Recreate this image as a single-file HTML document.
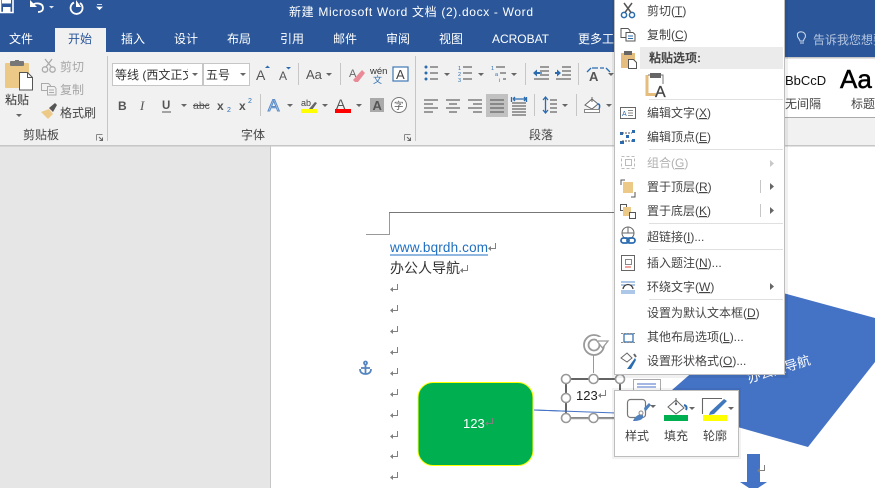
<!DOCTYPE html>
<html lang="zh-CN"><head><meta charset="utf-8"><title>新建 Microsoft Word 文档 (2).docx - Word</title>
<style>
html,body{margin:0;padding:0;width:875px;height:488px;overflow:hidden;background:#e6e6e6}
svg{display:block;font-family:"Liberation Sans","Noto Sans CJK SC",sans-serif;font-size:12px}
.tab{fill:#fff}.rb{fill:#444}.dis{fill:#a6a6a6}.m{fill:#444}.md{fill:#b1b1b1}
.u{text-decoration:underline}
.sep{stroke:#c6c6c6;stroke-width:1}
.ln{stroke:#666;stroke-width:1.2;fill:none}
.bl{stroke:#2b6cb0;stroke-width:1.3;fill:none}
.h{fill:#fff;stroke:#999;stroke-width:1.6}
</style></head><body>
<svg width="875" height="488" viewBox="0 0 875 488" xmlns="http://www.w3.org/2000/svg">
<defs>
<symbol id="ar" overflow="visible"><path d="M0 0h6l-3 3z" fill="#666"/></symbol>
<symbol id="ret" overflow="visible"><path d="M7.500 0v5.500H2" fill="none" stroke="#808080"/><path d="M0 5.500l3-2.500v5z" fill="#808080"/></symbol>
<symbol id="lau" overflow="visible"><path d="M.5.5h6M.5.5v6" stroke="#888" fill="none"/><path d="M3 3l3.500 3.500M6.500 3.500v3h-3" stroke="#666" fill="none"/></symbol>
</defs>

<!-- base -->
<rect width="875" height="488" fill="#e6e6e6"/>
<rect x="270" y="146" width="605" height="342" fill="#fff"/>
<rect x="270" y="146" width="1" height="342" fill="#c6c6c6"/>
<rect width="875" height="52" fill="#2b579a"/>
<rect y="52" width="875" height="93" fill="#f1f1f1"/>
<rect y="145" width="875" height="1.500" fill="#c6c6c6"/>
<rect x="55" y="28" width="51" height="25" fill="#f1f1f1"/>
<rect x="785" y="52" width="90" height="5" fill="#2b579a"/>
<rect x="785" y="57" width="90" height="60" fill="#fff"/>
<rect x="785" y="57" width="90" height="1.500" fill="#c6c6c6"/>
<rect x="785" y="117" width="90" height="1" fill="#aaa"/>

<!-- QAT -->
<path d="M.5 0V12.500H13V0" fill="none" stroke="#fff" stroke-width="1.600"/><rect x="3" y="7" width="7.500" height="5" fill="#fff"/><rect x="2" y="0" width="9" height="3.500" fill="#fff"/>
<path d="M31 5.500C36 2 43 3 43 8c0 3-2.500 4-5 4" fill="none" stroke="#fff" stroke-width="1.800"/><path d="M30 0v7h7z" fill="#fff"/>
<path d="M49 6h5l-2.500 2.500z" fill="#dfe6f1"/>
<path d="M74 2.500a6 6 0 1 0 6 .5" fill="none" stroke="#fff" stroke-width="1.800"/><path d="M76 0v7h5z" fill="#fff"/>
<path d="M97 4.500h5M97 7h5l-2.500 2.500z" stroke="#fff" fill="#fff" stroke-width=".8"/>
<text x="289" y="16" fill="#fff" textLength="244" lengthAdjust="spacing">新建 Microsoft Word 文档 (2).docx - Word</text>

<!-- tabs -->
<text x="9" y="43" class="tab">文件</text><text x="68" y="43" fill="#2b579a">开始</text>
<text x="121" y="43" class="tab">插入</text><text x="174" y="43" class="tab">设计</text><text x="227" y="43" class="tab">布局</text><text x="280" y="43" class="tab">引用</text><text x="333" y="43" class="tab">邮件</text><text x="386" y="43" class="tab">审阅</text><text x="439" y="43" class="tab">视图</text>
<text x="492" y="43" class="tab" textLength="57">ACROBAT</text><text x="578" y="43" class="tab">更多工具</text>
<path d="M798 33.500a4.500 4.500 0 0 1 8 2.500c0 2-2 3-2 5h-3.500c0-2-2.500-3-2.500-5 0-1 0-2 0-2.500zM800.500 43h4" fill="none" stroke="#c8d4e8" stroke-width="1.100" transform="translate(-.5 0)"/>
<text x="813" y="44" fill="#b4c4de">告诉我您想要</text>

<!-- clipboard -->
<rect x="5" y="63" width="24" height="25" rx="1" fill="#edc987"/>
<rect x="10" y="61" width="14" height="5" rx="1" fill="#777"/><rect x="15" y="60" width="4" height="3" fill="#777"/>
<path d="M19.500 72.500h8l5 5v12.500h-13z" fill="#fff" stroke="#555"/><path d="M27.500 72.500v5h5" fill="none" stroke="#555"/>
<text x="5" y="104" fill="#333">粘贴</text>
<use href="#ar" x="16" y="114"/>
<g fill="none" stroke="#aaa" stroke-width="1.300"><circle cx="45" cy="69.500" r="2.700"/><circle cx="52.500" cy="69.500" r="2.700"/><path d="M46 67L52 59M51.500 67L45 59"/></g>
<text x="60" y="71" class="dis">剪切</text>
<g fill="none" stroke="#aaa"><path d="M41.500 83.500h7l2 2v5h-9z"/><path d="M47.500 86.500h7l1.500 2v6.500h-8.500z" fill="#f1f1f1"/><path d="M49 90h5M49 92.500h5"/></g>
<text x="60" y="94" class="dis">复制</text>
<path d="M41 112l8-3 4 5-5 5c-3-3-5-5-7-7z" fill="#edc987"/><path d="M49 108l6-5 2 2-4 7z" fill="#555"/>
<text x="60" y="117" class="rb">格式刷</text>
<text x="23" y="139" class="rb">剪贴板</text>
<use href="#lau" x="96" y="134"/>
<path class="sep" d="M107.500 56v85"/>

<!-- font -->
<rect x="112.500" y="63.500" width="90" height="22" fill="#fff" stroke="#c6c6c6"/>
<rect x="203.500" y="63.500" width="46" height="22" fill="#fff" stroke="#c6c6c6"/>
<svg x="114" y="64" width="74" height="21" style="overflow:hidden"><text x="1" y="15" fill="#333">等线 (西文正文)</text></svg>
<use href="#ar" x="192" y="73"/><text x="206" y="79" fill="#333">五号</text><use href="#ar" x="240" y="73"/>
<text x="256" y="80" font-size="14" fill="#555">A</text><path d="M265 68h5l-2.500-2.500z" fill="#2b6cb0"/>
<text x="279" y="80" font-size="12" fill="#555">A</text><path d="M286 67h5l-2.500 2.500z" fill="#2b6cb0"/>
<path class="sep" d="M298.500 63v22"/>
<text x="306" y="79" font-size="13" fill="#555">Aa</text><use href="#ar" x="326" y="73"/>
<path class="sep" d="M340.500 63v22"/>
<text x="349" y="77" font-size="11" fill="#666">A</text><path d="M353 80l9-10 3 3-7 9h-3z" fill="#e98a96"/>
<text x="370" y="74" font-size="9.500" fill="#333">wén</text><text x="373" y="83" font-size="9" fill="#2b6cb0">文</text>
<rect x="393" y="67" width="15" height="14" fill="#fff" stroke="#3f77b5" stroke-width="1.200"/><text x="396" y="79" font-size="13" fill="#444">A</text>

<text x="118" y="110" font-weight="700" fill="#555">B</text>
<text x="140" y="110" font-style="italic" font-family="Liberation Serif" font-size="13" fill="#555">I</text>
<text x="162" y="109" font-weight="700" fill="#555" font-size="11.500">U</text><path d="M162 112h9" stroke="#555"/><use href="#ar" x="181" y="104"/>
<text x="193" y="109" font-size="10.500" fill="#555">abc</text><path d="M193 105.500h16" stroke="#555"/>
<text x="217" y="110" font-weight="700" fill="#555">x</text><text x="227" y="112" font-size="7" fill="#2b6cb0">2</text>
<text x="239" y="110" font-weight="700" fill="#555">x</text><text x="248" y="103" font-size="7" fill="#2b6cb0">2</text>
<path class="sep" d="M260.500 94v22"/>
<text x="268" y="111" font-size="17" fill="#fff" stroke="#5b8ec9" stroke-width="1.100">A</text><use href="#ar" x="287" y="104"/>
<text x="301" y="106" font-size="9" fill="#444">ab</text><path d="M309 109l6-7 2 1-5 7z" fill="#666"/><rect x="301" y="109" width="16" height="4" fill="#ff0"/><use href="#ar" x="322" y="104"/>
<text x="336" y="109" font-size="14" fill="#555">A</text><rect x="335" y="109" width="16" height="4" fill="#f00"/><use href="#ar" x="356" y="104"/>
<rect x="370" y="98" width="14" height="14" fill="#aaa"/><text x="372.500" y="110" font-size="13" font-weight="700" fill="#555">A</text>
<circle cx="399" cy="105" r="7.500" fill="#fff" stroke="#777"/><text x="394" y="109" font-size="9.500" fill="#555">字</text>
<text x="241" y="139" class="rb">字体</text>
<use href="#lau" x="404" y="134"/>
<path class="sep" d="M415.500 56v85"/>

<!-- paragraph -->
<g fill="#2b6cb0"><circle cx="426" cy="67" r="1.500"/><circle cx="426" cy="73" r="1.500"/><circle cx="426" cy="79" r="1.500"/></g>
<path class="ln" d="M430 67h8M430 73h8M430 79h8"/><use href="#ar" x="444" y="73"/>
<text x="458" y="70" font-size="5.500" fill="#2b6cb0">1</text><text x="458" y="76" font-size="5.500" fill="#2b6cb0">2</text><text x="458" y="82" font-size="5.500" fill="#2b6cb0">3</text>
<path class="ln" d="M463 67h9M463 73h9M463 79h9"/><use href="#ar" x="478" y="73"/>
<text x="491" y="70" font-size="5.500" fill="#2b6cb0">1</text><text x="495" y="76" font-size="5.500" fill="#2b6cb0">a</text><text x="499" y="82" font-size="5.500" fill="#2b6cb0">i</text>
<path class="ln" d="M496 67h9M500 73h6M503 79h3"/><use href="#ar" x="511" y="73"/>
<path class="sep" d="M525.500 63v22"/>
<path class="ln" d="M540 67h9M540 71h9M540 75h9M534 79h15"/><path d="M533 73l4-3.500v2.500h3v2h-3v2.500z" fill="#2b6cb0"/><path d="M537 73h5" class="bl"/>
<path class="ln" d="M562 67h9M562 71h9M562 75h9M556 79h15"/><path d="M561 73l-4-3.500v2.500h-2v2h2v2.500z" fill="#2b6cb0"/>
<path class="sep" d="M578.500 63v22"/>
<text x="589" y="81" font-size="13" font-weight="700" fill="#555">A</text><path d="M587 72l4-4M610 72l-4-4M598 68h-6M600 68h4" class="bl"/><use href="#ar" x="608" y="73"/>

<path class="ln" d="M424 100h14M424 104h9M424 108h14M424 112h9"/>
<path class="ln" d="M446 100h14M449 104h8M446 108h14M449 112h8"/>
<path class="ln" d="M468 100h14M473 104h9M468 108h14M473 112h9"/>
<rect x="486" y="94" width="22" height="23" fill="#c1c1c1"/>
<path class="ln" d="M490 100h14M490 104h14M490 108h14M490 112h14"/>
<path class="ln" d="M512 103h14M512 106h14M512 109h14M512 112h14M512 115h14"/><path class="bl" d="M513 99h13M513 99l2-2M513 99l2 2M526 99l-2-2M526 99l-2 2"/><path class="bl" d="M511.500 97v5M526.500 97v5"/>
<path class="sep" d="M534.500 94v22"/>
<path class="bl" d="M545.500 97v16M543 100l2.500-3 2.500 3M543 110l2.500 3 2.500-3"/><path class="ln" d="M550 100h7M550 104h7M550 108h7M550 112h7"/><use href="#ar" x="562" y="104"/>
<path class="sep" d="M576.500 94v22"/>
<path d="M585 105l7-6 6 5-6 5z" fill="#fff" stroke="#666"/><path d="M592 97v5" stroke="#666"/><path d="M598 104c2 0 2 3 1 5" fill="none" stroke="#2b6cb0" stroke-width="1.500"/><rect x="584.500" y="109.500" width="15" height="3" fill="#fff" stroke="#888"/><use href="#ar" x="606" y="104"/>
<text x="529" y="139" class="rb">段落</text>

<!-- styles -->
<svg x="785" y="60" width="41" height="30"><text x="0" y="25" font-size="13" fill="#111">BbCcDc</text></svg>
<text x="785" y="108" class="rb">无间隔</text>
<text x="840" y="88" font-size="26" fill="#000" stroke="#000" stroke-width=".5">Aa</text>
<text x="851" y="108" class="rb">标题</text>

<!-- document -->
<path d="M389.500 212V234.500H366" fill="none" stroke="#999"/><path d="M389 212.500H615" stroke="#777"/>
<text x="390" y="252" font-size="13.500" fill="#1f6fc0" textLength="98">www.bqrdh.com</text><path d="M390 255h98" stroke="#1f6fc0"/>
<use href="#ret" x="488" y="243"/>
<text x="390" y="273" font-size="14" fill="#333">办公人导航</text><use href="#ret" x="460" y="265"/>
<use href="#ret" x="390" y="284"/><use href="#ret" x="390" y="305"/><use href="#ret" x="390" y="326"/><use href="#ret" x="390" y="347"/><use href="#ret" x="390" y="368"/><use href="#ret" x="390" y="389"/><use href="#ret" x="390" y="410"/><use href="#ret" x="390" y="431"/><use href="#ret" x="390" y="451"/><use href="#ret" x="390" y="472"/>
<g fill="none" stroke="#5585c0" stroke-width="1.800"><circle cx="365.500" cy="363" r="1.500"/><path d="M365.500 365v9M361 368h9M360 369c0 4 3 5 5.500 5s5.500-1 5.500-5"/></g>

<!-- shapes -->
<path d="M783 293L875 318V362L808 447L660 405L672 390z" fill="#4472c4"/>
<g transform="translate(749 383) rotate(-17)"><text x="0" y="0" fill="#fff" font-size="13">办公人导航</text></g>
<path d="M747 454h13v28h7l-13.500 9-13.500-9h7z" fill="#4472c4"/>
<use href="#ret" x="757" y="465"/>
<rect x="418" y="382.500" width="115" height="83" rx="15" fill="#00b050" stroke="#ff0"/>
<text x="463" y="428" fill="#fff" font-size="13">123</text><use href="#ret" x="485" y="418"/>
<path d="M534 410L616 413" stroke="#4472c4"/>

<!-- selected textbox -->
<rect x="566" y="379" width="54" height="39" fill="#fff" stroke="#111" stroke-width="1.300"/>
<path d="M534 410L616 413" stroke="#4472c4"/>
<path d="M567 418.500H620" stroke="#999" stroke-width="1.500"/>
<text x="576" y="400" font-size="13" fill="#222">123</text><use href="#ret" x="598" y="390"/>
<path d="M593.500 355v18" stroke="#999"/>
<g fill="none" stroke="#9a9a9a" stroke-width="1.800"><circle cx="594" cy="345" r="10"/><circle cx="594" cy="345" r="5.500"/></g><rect x="597" y="337" width="9" height="7" fill="#fff"/><path d="M597 341h11l-5.500 7z" fill="#fff" stroke="#9a9a9a" stroke-width="1.300"/>
<circle class="h" cx="566" cy="379" r="4.500"/><circle class="h" cx="593.500" cy="379" r="4.500"/><circle class="h" cx="620" cy="379" r="4.500"/><circle class="h" cx="566" cy="398" r="4.500"/><circle class="h" cx="566" cy="418" r="4.500"/><circle class="h" cx="593.500" cy="418" r="4.500"/>
<rect x="633.500" y="379.500" width="27" height="22" fill="#fff" stroke="#aaa"/><path d="M637 384h19M637 387h19" stroke="#4472c4"/>

<!-- context menu -->
<rect x="612" y="-4" width="176" height="382" fill="#000" opacity=".06"/>
<rect x="614.500" y="-3" width="170" height="377.500" fill="#fff" stroke="#bdbdbd"/>
<rect x="640" y="47" width="143" height="22" fill="#ebebeb"/>
<g fill="none" stroke="#2b6cb0" stroke-width="1.500"><circle cx="624" cy="15" r="2.600"/><circle cx="632" cy="15" r="2.600"/></g><path d="M625 12.500L632 3M631 12.500L624 3" stroke="#555" stroke-width="1.500"/>
<g fill="#fff" stroke="#555"><path d="M621 28.500h7l2 2v7h-9z"/><path d="M626 32.500h7l2 2v6.500h-9z"/></g><path d="M628 36h5M628 38.500h5" stroke="#2b6cb0"/>
<rect x="621" y="53" width="14" height="15" fill="#e5bd7e"/><rect x="624" y="51" width="8" height="4" fill="#666"/><path d="M628.500 59.500h5l3 3v6h-8z" fill="#fff" stroke="#555"/>
<path d="M647 75v19.500h9" fill="none" stroke="#e5bd7e" stroke-width="3"/><path d="M648 75h15v9" fill="none" stroke="#777"/><rect x="650" y="73" width="11" height="5" fill="#666"/><text x="655" y="97" font-size="16" fill="#444" stroke="#444" stroke-width=".3">A</text>
<path d="M649 99.500H783" stroke="#e0e0e0"/>

<text x="647" y="15" class="m">剪切(<tspan class="u">T</tspan>)</text>
<text x="647" y="39" class="m">复制(<tspan class="u">C</tspan>)</text>
<text x="649" y="62" font-weight="700" fill="#444">粘贴选项:</text>
<text x="647" y="117" class="m">编辑文字(<tspan class="u">X</tspan>)</text>
<rect x="620.500" y="107.500" width="15" height="11" fill="#fff" stroke="#666"/><text x="622" y="116" font-size="7" fill="#2b6cb0">A</text><path d="M628 110.500h5M628 113h5M628 115.500h5" stroke="#888"/>
<text x="647" y="141" class="m">编辑顶点(<tspan class="u">E</tspan>)</text>
<g fill="#2b6cb0"><rect x="620" y="141" width="4" height="3"/><rect x="632" y="139" width="3" height="3"/><rect x="620" y="132" width="3" height="3"/><rect x="632" y="130" width="3" height="3"/><rect x="626" y="135" width="3" height="3"/></g><path d="M622 133h10M622 141h10" stroke="#555" stroke-dasharray="2 1"/>
<path d="M649 149.500H783" stroke="#e0e0e0"/>
<text x="647" y="167" class="md">组合(<tspan class="u">G</tspan>)</text><path d="M770 160v7l4-3.500z" fill="#c8c8c8"/>
<g fill="none" stroke="#bbb"><rect x="621.500" y="156.500" width="13" height="12" stroke-dasharray="3 2"/><rect x="625.500" y="159.500" width="6" height="6"/></g>
<text x="647" y="191" class="m">置于顶层(<tspan class="u">R</tspan>)</text><path class="sep" d="M760.500 180v13"/><path d="M770 183v7l4-3.500z" fill="#666"/>
<path d="M621 185v-5h4M635 192v5h-4" fill="none" stroke="#555"/><rect x="623" y="182" width="10" height="11" fill="#edc987"/>
<text x="647" y="215" class="m">置于底层(<tspan class="u">K</tspan>)</text><path class="sep" d="M760.500 204v13"/><path d="M770 207v7l4-3.500z" fill="#666"/>
<rect x="620.500" y="204.500" width="6" height="6" fill="#fff" stroke="#555"/><rect x="623" y="207" width="8" height="9" fill="#edc987"/><rect x="629.500" y="212.500" width="6" height="6" fill="#fff" stroke="#555"/>
<path d="M649 223.500H783" stroke="#e0e0e0"/>
<text x="647" y="241" class="m">超链接(<tspan class="u">I</tspan>)...</text>
<g fill="none" stroke="#666"><circle cx="628" cy="233" r="6"/><path d="M622 233h12M628 227v6"/></g><g fill="none" stroke="#2b6cb0" stroke-width="1.800"><rect x="621" y="238" width="8" height="5" rx="2.500"/><rect x="627" y="238" width="8" height="5" rx="2.500"/></g>
<path d="M649 249.500H783" stroke="#e0e0e0"/>
<text x="647" y="267" class="m">插入题注(<tspan class="u">N</tspan>)...</text>
<rect x="621.500" y="255.500" width="13" height="15" fill="#fff" stroke="#666"/><rect x="625.500" y="259.500" width="6" height="5" fill="none" stroke="#888"/><path d="M625 267h6" stroke="#e0453a"/>
<text x="647" y="291" class="m">环绕文字(<tspan class="u">W</tspan>)</text><path d="M770 283v7l4-3.500z" fill="#666"/>
<path d="M621 282h14M621 285h14M621 291h14M621 293h14" stroke="#5a8fd0"/><path d="M623 289c1-6 9-6 10 0" fill="#fff" stroke="#444" stroke-width="1.300"/>
<path d="M649 299.500H783" stroke="#e0e0e0"/>
<text x="647" y="317" class="m">设置为默认文本框(<tspan class="u">D</tspan>)</text>
<text x="647" y="341" class="m">其他布局选项(<tspan class="u">L</tspan>)...</text>
<rect x="624" y="334" width="9" height="8" fill="#fff" stroke="#2b6cb0" stroke-width="1.200"/><path d="M621 333.500h14M621 342.500h14" stroke="#888" stroke-dasharray="2 1"/>
<text x="647" y="365" class="m">设置形状格式(<tspan class="u">O</tspan>)...</text>
<path d="M621 358l6-5 5 5-5 4z" fill="#fff" stroke="#666"/><path d="M627 369l8-11 1 2-5 9z" fill="#2b6cb0"/><path d="M634 354l2 3" stroke="#666" stroke-width="2"/>

<!-- mini toolbar -->
<rect x="612" y="388" width="129" height="71" fill="#000" opacity=".05"/>
<rect x="614.500" y="390.500" width="124" height="66" fill="#fff" stroke="#bdbdbd"/>
<rect x="627.500" y="399.500" width="18" height="18" rx="3" fill="#fff" stroke="#777" stroke-width="1.200"/>
<path d="M644 408l5-5 2 2-6 7zM633 421c2-5 6-7 9-7 2 2 1 4 0 5-3 2-6 2-9 2z" fill="#4e80bd"/><circle cx="641" cy="413" r="2" fill="#fff" stroke="#888"/><use href="#ar" x="650" y="405"/>
<text x="625" y="440" fill="#444">样式</text>
<path d="M668 407l8-7 8 8-8 6z" fill="#fff" stroke="#666"/><path d="M676 398v7" stroke="#666"/><circle cx="676" cy="404" r="1.200" fill="#666"/><path d="M684 405c3 1 3 3 2 5" fill="none" stroke="#2b6cb0" stroke-width="2"/><rect x="664" y="415" width="24" height="6" fill="#00b050"/><use href="#ar" x="689" y="407"/>
<text x="664" y="440" fill="#444">填充</text>
<path d="M722 398.500h-19.500V414" fill="none" stroke="#666" stroke-width="1.100"/><path d="M710 412l14-13 3 2-13 13-5 1z" fill="#3f78bd"/><rect x="703" y="415" width="24" height="6" fill="#ff0"/><use href="#ar" x="728" y="407"/>
<text x="703" y="440" fill="#444">轮廓</text>
</svg>
</body></html>
